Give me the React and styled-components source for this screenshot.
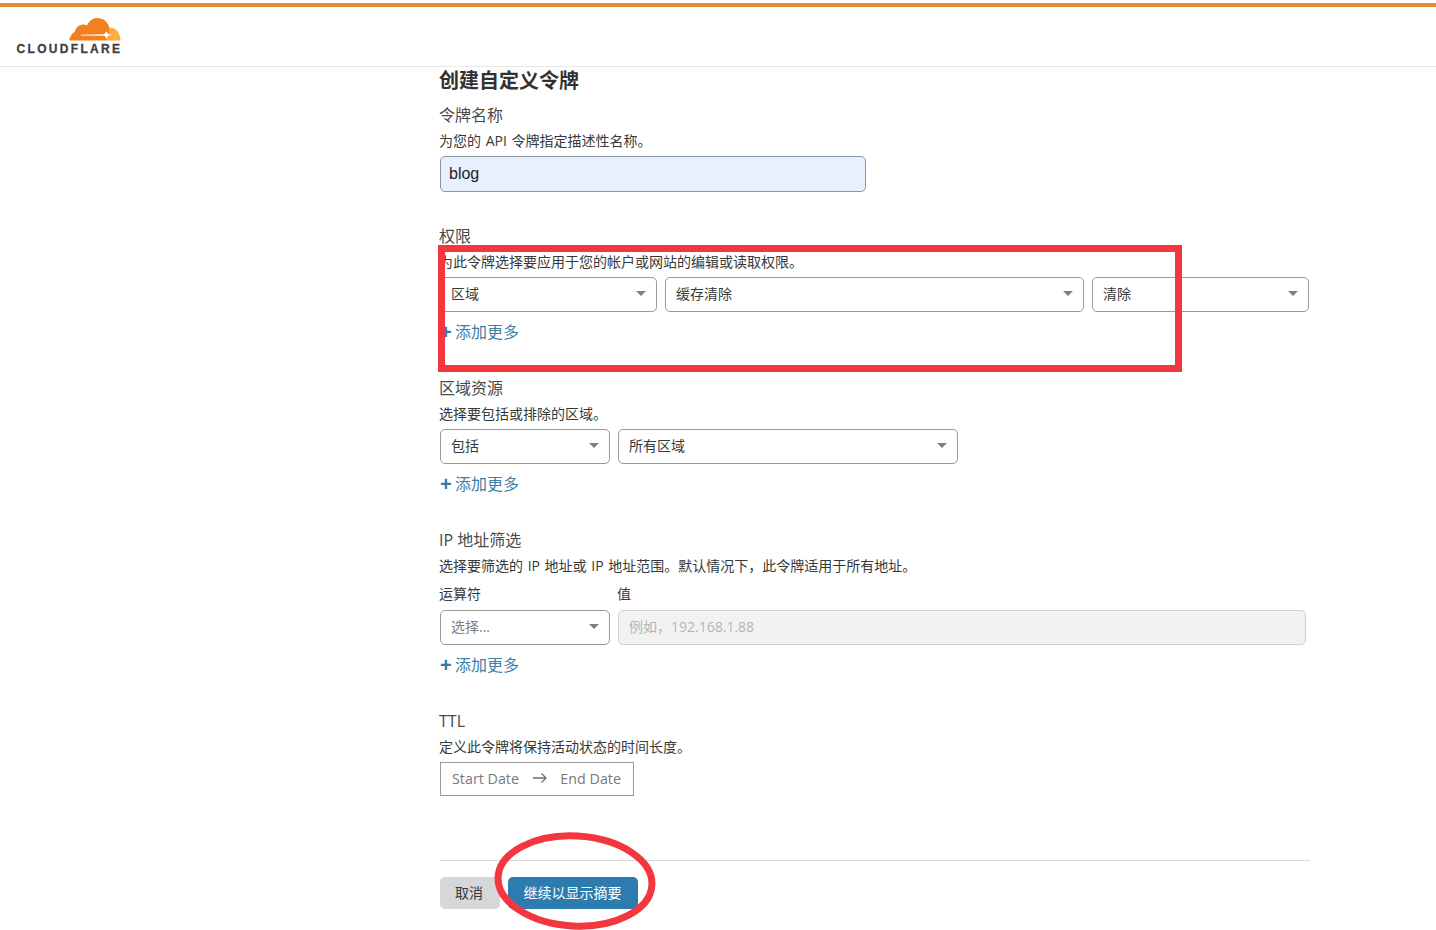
import React from 'react';
import styled, { createGlobalStyle } from 'styled-components';

const App = () => {
    return (
        <Page>
            <GlobalStyle />
            <TopBar />
            <Header>
                <Logo>
                    <svg width="52" height="25" viewBox="0 0 52 25">
                        <path d="M0 23.5C1 19 3 16 6 14.500C7 10.500 10 7.500 14 7.500C15.500 7.500 17 8 18 8.500C20 3.500 24 1 28.500 1C34.500 1 39 5 40.500 11C41.500 15 40.500 20 38 23.500Z" fill="#f38020" />
                        <path d="M39.500 11C46.500 9.500 51.500 16 51.500 23.500L37 23.500C40 19 41 15 39.500 11Z" fill="#fbad41" />
                        <path d="M12 17.800L35 17.200L37.800 14.500L39 17.300L43 18L39 18.700L37.800 22L35.500 18.800L12 18.400Z" fill="#fff" />
                    </svg>
                    <LogoText>CLOUDFLARE</LogoText>
                </Logo>
            </Header>
            <Content>
                <Title>创建自定义令牌</Title>

                <Section $height={112}>
                    <Label>令牌名称</Label>
                    <Desc>为您的 API 令牌指定描述性名称。</Desc>
                    <TextInput>blog</TextInput>
                </Section>

                <Section $height={143}>
                    <Label>权限</Label>
                    <Desc>为此令牌选择要应用于您的帐户或网站的编辑或读取权限。</Desc>
                    <Row>
                        <Select $width={217}>区域</Select>
                        <Select $width={419}>缓存清除</Select>
                        <Select $width={217}>清除</Select>
                    </Row>
                    <AddMore><Plus>+</Plus>添加更多</AddMore>
                </Section>

                <Section $height={143}>
                    <Label>区域资源</Label>
                    <Desc>选择要包括或排除的区域。</Desc>
                    <Row>
                        <Select $width={170}>包括</Select>
                        <Select $width={340}>所有区域</Select>
                    </Row>
                    <AddMore><Plus>+</Plus>添加更多</AddMore>
                </Section>

                <Section $height={172}>
                    <Label>IP 地址筛选</Label>
                    <Desc>选择要筛选的 IP 地址或 IP 地址范围。默认情况下，此令牌适用于所有地址。</Desc>
                    <Row>
                        <Field $width={170}>
                            <SmallLabel>运算符</SmallLabel>
                            <Select $width={170} $muted>选择...</Select>
                        </Field>
                        <Field $width={688}>
                            <SmallLabel>值</SmallLabel>
                            <DisabledInput>例如，192.168.1.88</DisabledInput>
                        </Field>
                    </Row>
                    <AddMore><Plus>+</Plus>添加更多</AddMore>
                </Section>

                <Section $height={150}>
                    <Label>TTL</Label>
                    <Desc>定义此令牌将保持活动状态的时间长度。</Desc>
                    <DateRange>
                        <span>Start Date</span>
                        <svg width="16" height="12" viewBox="0 0 16 12">
                            <path d="M1 6H14M9.500 1.500L14 6L9.500 10.500" fill="none" stroke="#6f6f6f" strokeWidth="1.300" />
                        </svg>
                        <span>End Date</span>
                    </DateRange>
                </Section>

                <Footer>
                    <CancelButton>取消</CancelButton>
                    <PrimaryButton>继续以显示摘要</PrimaryButton>
                </Footer>
            </Content>

            <RedBox />
            <RedCircle viewBox="0 0 162 98" width="162" height="98">
                <ellipse cx="81" cy="49" rx="77" ry="45" fill="none" stroke="#f4373f" strokeWidth="7" transform="rotate(3 81 49)" />
            </RedCircle>
        </Page>
    );
};

export default App;

const GlobalStyle = createGlobalStyle`
html, body {
    margin: 0;
    padding: 0;
    background: #fff;
}
body {
    font-family: "Open Sans", "Noto Sans CJK SC", sans-serif;
    color: #36393a;
    overflow: hidden;
}
`
const Page = styled.div`
position: relative;
width: 1436px;
height: 930px;
overflow: hidden;
padding-top: 3px;
box-sizing: border-box;
`
const TopBar = styled.div`
height: 4px;
background: #e98a3a;
`
const Header = styled.div`
height: 59px;
border-bottom: 1px solid #e8e8e8;
padding-left: 16px;
`
const Logo = styled.div`
display: flex;
flex-direction: column;
align-items: flex-end;
width: 105px;
padding-top: 10px;
svg {
    display: block;
}
`
const LogoText = styled.div`
font-family: "Liberation Sans", sans-serif;
font-weight: 700;
font-size: 12px;
line-height: 12px;
letter-spacing: 2.32px;
color: #404041;
white-space: nowrap;
margin: 1px -1.4px 0 0;
-webkit-text-stroke: 0.3px #404041;
`
const Content = styled.div`
width: 870px;
margin-left: 440px;
`
const Title = styled.h1`
margin: 0 0 0 -1px;
height: 28px;
font-size: 20px;
line-height: 27px;
font-weight: 700;
color: #313131;
`
const Section = styled.section`
height: ${p => p.$height}px;
`
const Label = styled.div`
font-size: 16px;
line-height: 22px;
height: 22px;
margin: 9px 0 0 -1px;
color: #4a4a4a;
`
const Desc = styled.div`
font-size: 14px;
line-height: 20px;
height: 20px;
margin: 5px 0 0 -1px;
color: #36393a;
word-spacing: 1px;
white-space: nowrap;
`
const TextInput = styled.div`
box-sizing: border-box;
width: 426px;
height: 36px;
margin-top: 5px;
padding-left: 8px;
font-family: "Liberation Sans", sans-serif;
font-size: 16px;
line-height: 33px;
color: #222;
background: #e8f0fe;
border: 1px solid #8c96a3;
border-radius: 5px;
`
const Row = styled.div`
display: flex;
align-items: flex-end;
gap: 8px;
margin-top: 5px;
`
const Field = styled.div`
width: ${p => p.$width}px;
`
const SmallLabel = styled.div`
font-size: 14px;
line-height: 20px;
height: 26px;
margin: 3px 0 0 -1px;
color: #36393a;
`
const Select = styled.div`
position: relative;
box-sizing: border-box;
width: ${p => p.$width}px;
height: 35px;
padding-left: 10px;
font-size: 14px;
line-height: 31px;
color: ${p => (p.$muted ? '#7f7f7f' : '#36393a')};
background: #fff;
border: 1px solid #9a9a9a;
border-radius: 5px;
&::after {
    content: "";
    position: absolute;
    right: 10px;
    top: 13px;
    border-left: 5px solid transparent;
    border-right: 5px solid transparent;
    border-top: 5px solid #808080;
}
`
const DisabledInput = styled.div`
box-sizing: border-box;
height: 35px;
padding-left: 10px;
font-size: 14px;
line-height: 31px;
color: #b5b5b5;
background: #f2f2f2;
border: 1px solid #d0d0d0;
border-radius: 5px;
`
const AddMore = styled.div`
display: flex;
align-items: center;
height: 22px;
margin-top: 9px;
font-size: 16px;
line-height: 22px;
color: #3f7ea6;
`
const Plus = styled.span`
width: 15px;
font-family: "Liberation Sans", sans-serif;
font-weight: 700;
font-size: 20px;
color: #2f7bab;
`
const DateRange = styled.div`
display: flex;
align-items: center;
justify-content: space-between;
box-sizing: border-box;
width: 194px;
height: 34px;
margin-top: 5px;
padding: 0 12px 2px 11px;
font-size: 14.3px;
color: #7a7a7a;
border: 1px solid #9a9a9a;
`
const Footer = styled.div`
display: flex;
gap: 8px;
border-top: 1px solid #d9d9d9;
padding-top: 16px;
`
const CancelButton = styled.button`
width: 60px;
height: 32px;
padding: 0 2px 2px 0;
font: inherit;
font-size: 14px;
color: #36393a;
background: #d5d7d8;
border: 0;
border-radius: 5px;
`
const PrimaryButton = styled.button`
width: 130px;
height: 32px;
padding: 0 1px 2px 0;
font: inherit;
font-size: 14px;
color: #fff;
background: #2c7cb0;
border: 0;
border-radius: 5px;
`
const RedBox = styled.div`
position: absolute;
left: 438px;
top: 245px;
width: 744px;
height: 127px;
box-sizing: border-box;
border: 7px solid #f4373f;
`
const RedCircle = styled.svg`
position: absolute;
left: 494px;
top: 832px;
`
